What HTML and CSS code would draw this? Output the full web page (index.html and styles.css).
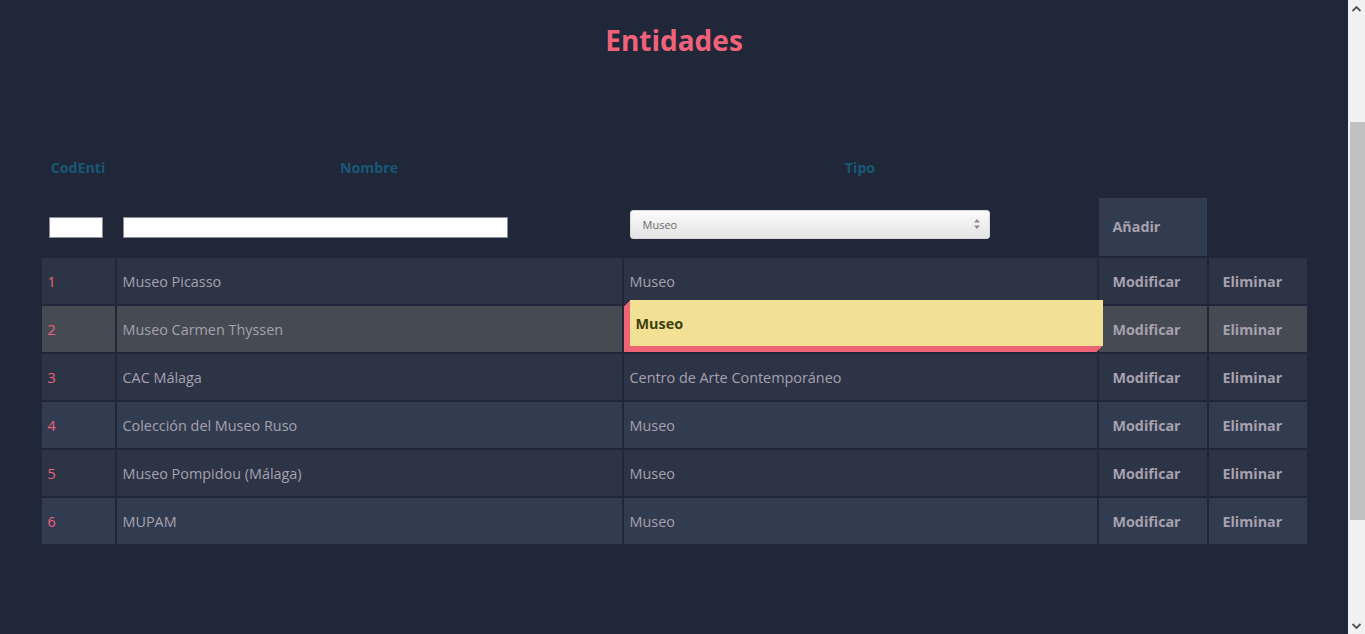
FILE: index.html
```html
<!DOCTYPE html>
<html lang="es">
<head>
<meta charset="utf-8">
<title>Entidades</title>
<link rel="stylesheet" href="styles.css">
</head>
<body>
<div class="window">
  <main class="page">
    <h1 class="title">Entidades</h1>
    <table class="grid">
      <thead>
        <tr class="head-row">
          <th class="c-cod">CodEnti</th>
          <th class="c-name">Nombre</th>
          <th class="c-type">Tipo</th>
          <th class="c-mod"></th>
          <th class="c-del"></th>
        </tr>
      </thead>
      <tbody>
        <tr class="form-row">
          <td><input class="in in-cod" type="text"></td>
          <td><input class="in in-name" type="text"></td>
          <td>
            <span class="select-wrap">
              <select class="sel"><option>Museo</option><option>Centro de Arte Contemporáneo</option></select>
              <svg class="sel-arrows" width="8" height="12" viewBox="0 0 8 12"><path d="M4 1 L7 4.5 H1 Z" fill="#8a8a8a"/><path d="M4 11 L7 7.5 H1 Z" fill="#8a8a8a"/></svg>
            </span>
          </td>
          <td class="add-cell"><button class="btn">Añadir</button></td>
          <td></td>
        </tr>
        <tr class="row row-dark">
          <td class="num">1</td><td>Museo Picasso</td><td>Museo</td>
          <td><button class="btn">Modificar</button></td><td><button class="btn">Eliminar</button></td>
        </tr>
        <tr class="row row-hover">
          <td class="num">2</td><td>Museo Carmen Thyssen</td><td class="cell-hover">Museo</td>
          <td><button class="btn">Modificar</button></td><td><button class="btn">Eliminar</button></td>
        </tr>
        <tr class="row row-dark">
          <td class="num">3</td><td>CAC Málaga</td><td>Centro de Arte Contemporáneo</td>
          <td><button class="btn">Modificar</button></td><td><button class="btn">Eliminar</button></td>
        </tr>
        <tr class="row row-light">
          <td class="num">4</td><td>Colección del Museo Ruso</td><td>Museo</td>
          <td><button class="btn">Modificar</button></td><td><button class="btn">Eliminar</button></td>
        </tr>
        <tr class="row row-dark">
          <td class="num">5</td><td>Museo Pompidou (Málaga)</td><td>Museo</td>
          <td><button class="btn">Modificar</button></td><td><button class="btn">Eliminar</button></td>
        </tr>
        <tr class="row row-light">
          <td class="num">6</td><td>MUPAM</td><td>Museo</td>
          <td><button class="btn">Modificar</button></td><td><button class="btn">Eliminar</button></td>
        </tr>
      </tbody>
    </table>
  </main>
  <div class="scrollbar">
    <div class="sb-arrow"><svg width="9" height="6" viewBox="0 0 9 6"><path d="M0.5 5 L4.5 1 L8.5 5" fill="none" stroke="#505050" stroke-width="1.8"/></svg></div>
    <div class="sb-track"><div class="sb-thumb"></div></div>
    <div class="sb-arrow"><svg width="9" height="6" viewBox="0 0 9 6"><path d="M0.5 1 L4.5 5 L8.5 1" fill="none" stroke="#505050" stroke-width="1.8"/></svg></div>
  </div>
</div>
</body>
</html>
```

FILE: styles.css
```css
html, body {
  margin: 0;
  padding: 0;
  height: 100%;
  overflow: hidden;
}

body {
  background: #1F2739;
  font-family: "Open Sans", "DejaVu Sans", sans-serif;
  color: #A7A1AE;
}

.window {
  display: flex;
  height: 634px;
}

.page {
  flex: 1;
  min-width: 0;
}

.title {
  margin: 0;
  padding-top: 23px;
  font-size: 28px;
  line-height: 34px;
  font-weight: 700;
  color: #F0627A;
  text-align: center;
}

.grid {
  margin: 79px auto 0;
  width: 1269px;
  table-layout: fixed;
  border-collapse: separate;
  border-spacing: 2px;
}

.grid th {
  height: 58px;
  padding: 0;
  font-size: 14.2px;
  font-weight: 700;
  color: #185875;
  text-align: center;
  vertical-align: middle;
}

.c-cod { width: 73px; }
.c-name { width: 505px; }
.c-type { width: 473px; }
.c-mod { width: 108px; }
.c-del { width: 98px; }

.grid td {
  box-sizing: border-box;
  height: 46px;
  padding: 1px 6px 0;
  font-size: 14.4px;
  line-height: 20px;
  color: #A7A1AE;
  text-align: left;
  vertical-align: middle;
  white-space: nowrap;
}

.grid .form-row td {
  height: 58px;
  padding-top: 0;
}

.in {
  display: block;
  box-sizing: border-box;
  height: 21px;
  margin: 0;
  padding: 0 3px;
  border: 1px solid #8a8c98;
  background: #fff;
  font-family: inherit;
  font-size: 12px;
}

.in-cod {
  width: 54px;
  margin-left: 1px;
}

.in-name {
  width: 385px;
}

.select-wrap {
  position: relative;
  display: block;
  width: 360px;
  height: 29px;
  margin-top: -6px;
}

.sel {
  -webkit-appearance: none;
  appearance: none;
  display: block;
  box-sizing: border-box;
  width: 360px;
  height: 29px;
  margin: 0;
  padding: 0 12px;
  border: 1px solid #d9d9d9;
  border-radius: 3px;
  background: linear-gradient(#fbfbfb, #e3e3e3);
  font-family: "Open Sans", sans-serif;
  font-size: 11px;
  color: #6b6b6b;
}

.sel-arrows {
  position: absolute;
  right: 9px;
  top: 8px;
}

.add-cell {
  background: #323C50;
}

.btn {
  padding: 0 8px;
  margin: 0;
  border: 0;
  background: transparent;
  font-family: inherit;
  font-size: 14.3px;
  font-weight: 700;
  color: #A7A1AE;
  line-height: 20px;
  cursor: pointer;
}

.row-dark td { background: #2C3446; }
.row-light td { background: #323C50; }
.row-hover td { background: #464A52; }

.grid td.num {
  color: #F0627A;
}

.grid td.cell-hover {
  background: #F2E194;
  color: #403E10;
  font-weight: 700;
  transform: translate(6px, -6px);
  box-shadow:
    -1px 1px #EF6474,
    -2px 2px #EF6474,
    -3px 3px #EF6474,
    -4px 4px #EF6474,
    -5px 5px #EF6474,
    -6px 6px #EF6474;
}

.scrollbar {
  width: 17px;
  display: flex;
  flex-direction: column;
  background: #F1F1F1;
}

.sb-arrow {
  height: 17px;
  display: flex;
  align-items: center;
  justify-content: center;
}

.sb-track {
  flex: 1;
  padding-top: 105px;
}

.sb-thumb {
  margin-left: 2px;
  width: 15px;
  height: 398px;
  background: #C1C1C1;
}
```
